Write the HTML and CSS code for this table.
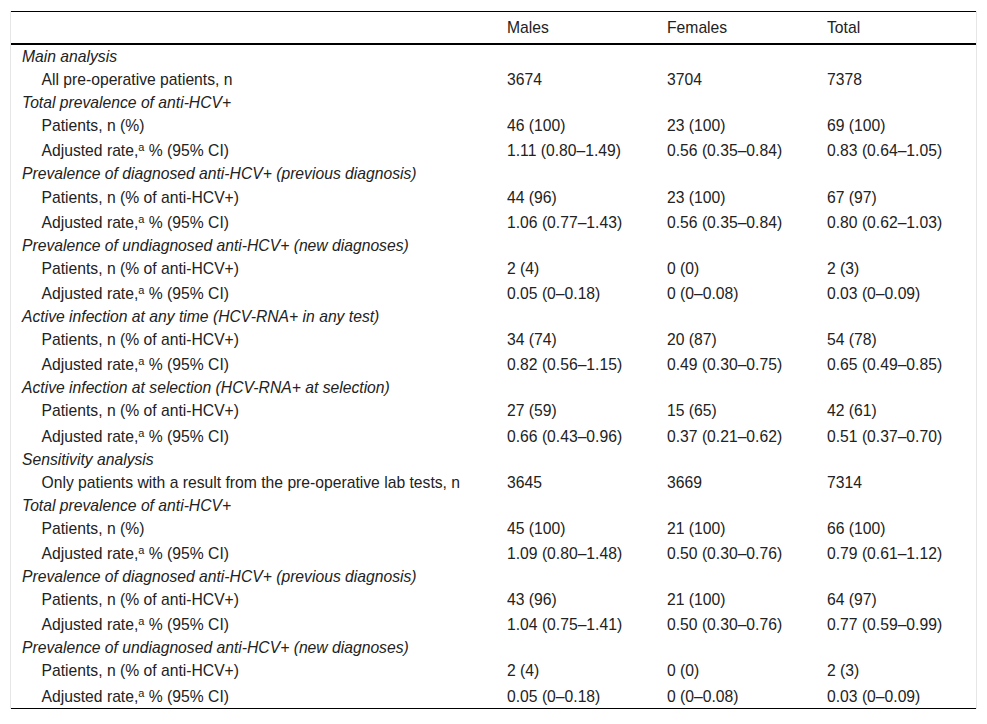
FILE: index.html
```html
<!DOCTYPE html>
<html>
<head>
<meta charset="utf-8">
<link rel="stylesheet" href="styles.css">
</head>
<body>
<div class="wrap">
<table class="tbl">
<colgroup><col class="c0"><col class="c1"><col class="c2"><col class="c3"></colgroup>
<thead>
<tr><th></th><th>Males</th><th>Females</th><th>Total</th></tr>
</thead>
<tbody>
<tr><td class="sec">Main analysis</td><td></td><td></td><td></td></tr>
<tr><td class="ind">All pre-operative patients, n</td><td>3674</td><td>3704</td><td>7378</td></tr>
<tr><td class="sec">Total prevalence of anti-HCV+</td><td></td><td></td><td></td></tr>
<tr><td class="ind">Patients, n (%)</td><td>46 (100)</td><td>23 (100)</td><td>69 (100)</td></tr>
<tr class="adj"><td class="ind">Adjusted rate,<sup>a</sup> % (95% CI)</td><td>1.11 (0.80–1.49)</td><td>0.56 (0.35–0.84)</td><td>0.83 (0.64–1.05)</td></tr>
<tr><td class="sec">Prevalence of diagnosed anti-HCV+ (previous diagnosis)</td><td></td><td></td><td></td></tr>
<tr><td class="ind">Patients, n (% of anti-HCV+)</td><td>44 (96)</td><td>23 (100)</td><td>67 (97)</td></tr>
<tr class="adj"><td class="ind">Adjusted rate,<sup>a</sup> % (95% CI)</td><td>1.06 (0.77–1.43)</td><td>0.56 (0.35–0.84)</td><td>0.80 (0.62–1.03)</td></tr>
<tr><td class="sec">Prevalence of undiagnosed anti-HCV+ (new diagnoses)</td><td></td><td></td><td></td></tr>
<tr><td class="ind">Patients, n (% of anti-HCV+)</td><td>2 (4)</td><td>0 (0)</td><td>2 (3)</td></tr>
<tr class="adj"><td class="ind">Adjusted rate,<sup>a</sup> % (95% CI)</td><td>0.05 (0–0.18)</td><td>0 (0–0.08)</td><td>0.03 (0–0.09)</td></tr>
<tr><td class="sec">Active infection at any time (HCV-RNA+ in any test)</td><td></td><td></td><td></td></tr>
<tr><td class="ind">Patients, n (% of anti-HCV+)</td><td>34 (74)</td><td>20 (87)</td><td>54 (78)</td></tr>
<tr class="adj"><td class="ind">Adjusted rate,<sup>a</sup> % (95% CI)</td><td>0.82 (0.56–1.15)</td><td>0.49 (0.30–0.75)</td><td>0.65 (0.49–0.85)</td></tr>
<tr><td class="sec">Active infection at selection (HCV-RNA+ at selection)</td><td></td><td></td><td></td></tr>
<tr><td class="ind">Patients, n (% of anti-HCV+)</td><td>27 (59)</td><td>15 (65)</td><td>42 (61)</td></tr>
<tr class="adj"><td class="ind">Adjusted rate,<sup>a</sup> % (95% CI)</td><td>0.66 (0.43–0.96)</td><td>0.37 (0.21–0.62)</td><td>0.51 (0.37–0.70)</td></tr>
<tr><td class="sec">Sensitivity analysis</td><td></td><td></td><td></td></tr>
<tr><td class="ind">Only patients with a result from the pre-operative lab tests, n</td><td>3645</td><td>3669</td><td>7314</td></tr>
<tr><td class="sec">Total prevalence of anti-HCV+</td><td></td><td></td><td></td></tr>
<tr><td class="ind">Patients, n (%)</td><td>45 (100)</td><td>21 (100)</td><td>66 (100)</td></tr>
<tr class="adj"><td class="ind">Adjusted rate,<sup>a</sup> % (95% CI)</td><td>1.09 (0.80–1.48)</td><td>0.50 (0.30–0.76)</td><td>0.79 (0.61–1.12)</td></tr>
<tr><td class="sec">Prevalence of diagnosed anti-HCV+ (previous diagnosis)</td><td></td><td></td><td></td></tr>
<tr><td class="ind">Patients, n (% of anti-HCV+)</td><td>43 (96)</td><td>21 (100)</td><td>64 (97)</td></tr>
<tr class="adj"><td class="ind">Adjusted rate,<sup>a</sup> % (95% CI)</td><td>1.04 (0.75–1.41)</td><td>0.50 (0.30–0.76)</td><td>0.77 (0.59–0.99)</td></tr>
<tr><td class="sec">Prevalence of undiagnosed anti-HCV+ (new diagnoses)</td><td></td><td></td><td></td></tr>
<tr><td class="ind">Patients, n (% of anti-HCV+)</td><td>2 (4)</td><td>0 (0)</td><td>2 (3)</td></tr>
<tr class="adj"><td class="ind">Adjusted rate,<sup>a</sup> % (95% CI)</td><td>0.05 (0–0.18)</td><td>0 (0–0.08)</td><td>0.03 (0–0.09)</td></tr>
</tbody>
</table>
</div>
</body>
</html>
```
FILE: styles.css
```css
html, body {
  margin: 0;
  padding: 0;
  background: #ffffff;
}
body {
  padding: 11px 10px 0 10px;
  font-family: "Liberation Sans", Arial, sans-serif;
  font-size: 15.7px;
  color: #222222;
}
.wrap {
  width: 965px;
  border-left: 1px solid #e6e6e6;
  border-right: 1px solid #e6e6e6;
}
.tbl {
  width: 965px;
  border-collapse: separate;
  border-spacing: 0;
  table-layout: fixed;
  border-top: 1px solid #000;
  border-bottom: 1px solid #000;
}
.c0 { width: 485px; }
.c1 { width: 160px; }
.c2 { width: 160px; }
.c3 { width: 160px; }
th {
  font-weight: normal;
  text-align: left;
  padding: 7px 11px;
  line-height: 17px;
  height: 17px;
  border-bottom: 2px solid #000;
}
td {
  padding: 3px 11px;
  line-height: 17.1px;
  white-space: nowrap;
  vertical-align: middle;
}
.adj td {
  padding-top: 5px;
  padding-bottom: 3px;
}
td.sec {
  font-style: italic;
}
td.ind {
  padding-left: 30.5px;
}
sup {
  font-size: 11px;
  line-height: 0;
  vertical-align: 5px;
}
```
